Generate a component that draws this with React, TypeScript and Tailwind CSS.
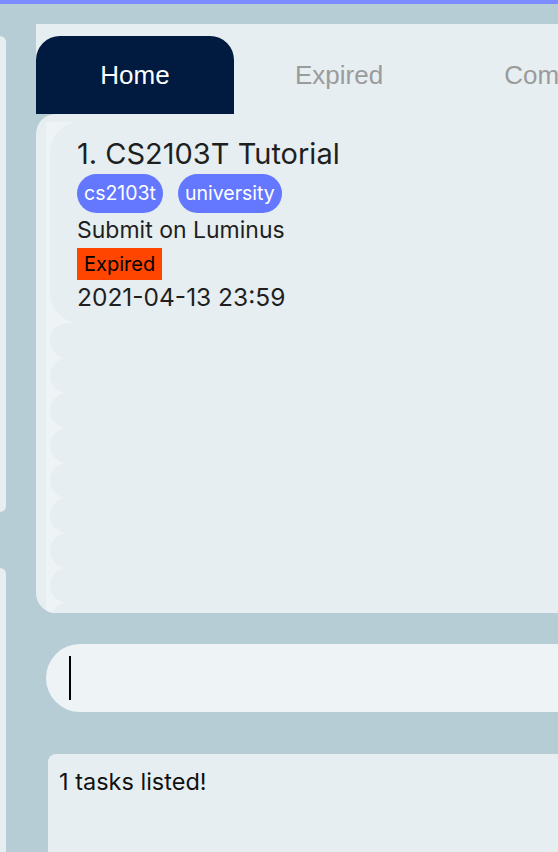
export default function App() {
  const emptyCells = Array.from({ length: 9 });

  return (
    <div className="w-[558px] h-[852px] overflow-hidden bg-[#b6cdd5] border-t-4 border-[#7b8cff] flex font-['Inter',sans-serif]">
      {/* sidebar edge peeking in on the left */}
      <div className="w-[6px] shrink-0 flex flex-col">
        <div className="mt-[32px] h-[476px] bg-[#e6eef1] rounded-r-[20px]" />
        <div className="mt-[56px] flex-1 bg-[#e6eef1] rounded-tr-[20px]" />
      </div>

      <div className="ml-[30px] w-[620px] shrink-0 flex flex-col">
        {/* tabs */}
        <div className="mt-[20px] h-[90px] bg-[#e6eef1] flex items-end overflow-hidden font-['Liberation_Sans',Arial,sans-serif] text-[26px] whitespace-nowrap">
          <div className="w-[198px] shrink-0 h-[78px] bg-[#001a40] rounded-t-[24px] flex items-center justify-center text-white">
            Home
          </div>
          <div className="shrink-0 h-[78px] flex items-center px-[61px] text-[#9b9b9b]">Expired</div>
          <div className="shrink-0 h-[78px] flex items-center px-[60px] text-[#9b9b9b]">Completed</div>
        </div>

        {/* task list */}
        <div className="h-[499px] bg-[#e6eef1] rounded-l-[20px] overflow-hidden pl-[10px] pt-[8px]">
          <div className="h-full bg-[#eef3f6] pl-[4px] flex flex-col">
            <div className="h-[201px] shrink-0 bg-[#e6eef1] rounded-l-[30px] pl-[27px] pt-[15px] text-[#1f1f1f]">
              <div className="text-[29px] leading-[34px]">1. CS2103T Tutorial</div>
              <div className="flex gap-[15px] mt-[3px]">
                <span className="bg-[#6478ff] text-white text-[19.5px] leading-[39px] h-[39px] px-[7px] rounded-full">
                  cs2103t
                </span>
                <span className="bg-[#6478ff] text-white text-[19.5px] leading-[39px] h-[39px] px-[7px] rounded-full">
                  university
                </span>
              </div>
              <div className="text-[23px] leading-[30px] mt-[2px]">Submit on Luminus</div>
              <div className="flex mt-[3px]">
                <span className="bg-[#ff4500] text-black text-[20px] leading-[32px] h-[32px] px-[7px]">Expired</span>
              </div>
              <div className="text-[24.5px] leading-[30px] mt-[2px]">2021-04-13 23:59</div>
            </div>
            {emptyCells.map((_, i) => (
              <div key={i} className="h-[35px] shrink-0 bg-[#e6eef1] rounded-l-[30px]" />
            ))}
          </div>
        </div>

        {/* command box */}
        <div className="mt-[31px] ml-[10px] h-[68px] bg-[#eef3f6] rounded-l-full flex items-center pl-[23px]">
          <div className="w-[2px] h-[44px] bg-black" />
        </div>

        {/* result display */}
        <div className="mt-[42px] ml-[12px] flex-1 bg-[#e6eef1] rounded-tl-[8px] pl-[11px] pt-[10px] text-[23.5px] text-[#111]">
          1 tasks listed!
        </div>
      </div>
    </div>
  );
}
